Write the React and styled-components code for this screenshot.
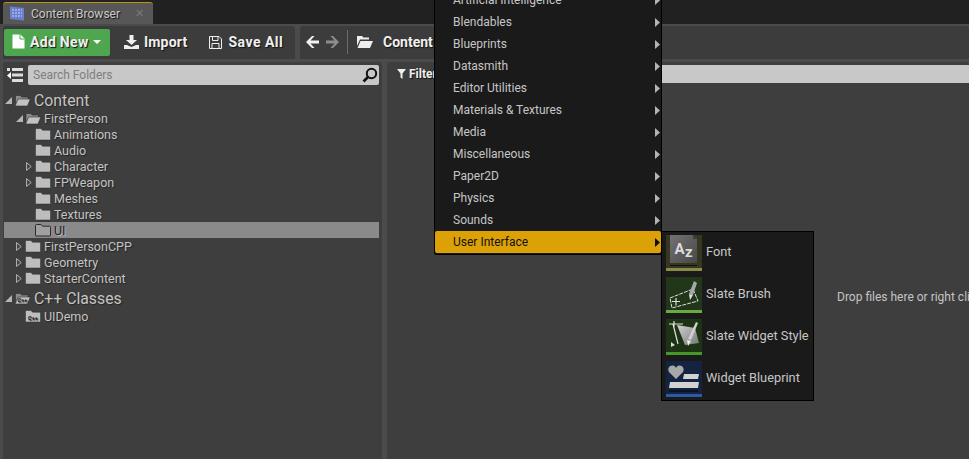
import React from "react";
import styled, { createGlobalStyle } from "styled-components";

const Global = createGlobalStyle`
  html, body { margin: 0; padding: 0; background: #212121; overflow: hidden; }
  #root { width: 969px; height: 459px; }
`;

const Page = styled.div`
  position: relative;
  width: 969px;
  height: 459px;
  overflow: hidden;
  display: flex;
  flex-direction: column;
  background: #212121;
  font-family: Roboto, "Liberation Sans", sans-serif;
`;

const TabStrip = styled.div`
  height: 24px;
  flex: none;
  padding: 2px 0 0 3px;
  box-sizing: border-box;
  display: flex;
`;

const Tab = styled.div`
  width: 150px;
  height: 22px;
  box-sizing: border-box;
  background: #575757;
  border-top: 1px solid #b8960f;
  border-radius: 3px 3px 0 0;
  display: flex;
  align-items: center;
  padding: 0 0 0 6px;
  color: #c9c9c9;
  font-size: 12px;
`;

const TabLabel = styled.span`
  margin-left: 6px;
  text-shadow: 1px 1px 1px #111;
`;

const TabClose = styled.span`
  margin-left: 15px;
  color: #7a7a7a;
  font-size: 11px;
`;

const Body = styled.div`
  flex: 1;
  min-height: 0;
  background: #4b4b4b;
  display: flex;
  flex-direction: column;
  padding: 2px 0 0 3px;
  gap: 3px;
`;

const ToolRow = styled.div`
  display: flex;
  gap: 5px;
  height: 33px;
  flex: none;
`;

const ToolGroup = styled.div`
  background: #3c3c3c;
  border-radius: 3px 3px 0 0;
  display: flex;
  align-items: center;
  box-sizing: border-box;
  height: 33px;
  width: ${(p) => p.$w}px;
  padding: 0 0 1px ${(p) => p.$pad}px;
`;

const AddButton = styled.div`
  width: 106px;
  height: 27px;
  background: #4ea64f;
  border-radius: 2px;
  display: flex;
  align-items: center;
  padding: 0 0 1px 8px;
  box-sizing: border-box;
  margin-right: 14px;
`;

const ToolText = styled.span`
  color: #f0f0f0;
  font-size: 14px;
  font-weight: 700;
  letter-spacing: ${(p) => p.$ls || 0}px;
  text-shadow: 1px 1px 1px #111;
  margin-left: ${(p) => p.$ml || 5}px;
  margin-right: ${(p) => p.$mr || 0}px;
  white-space: nowrap;
`;

const Divider = styled.div`
  width: 1px;
  height: 24px;
  background: #6a6a6a;
  margin: 0 9px 0 8px;
`;

const Panels = styled.div`
  flex: 1;
  display: flex;
  gap: 5px;
  min-height: 0;
`;

const LeftPanel = styled.div`
  width: 379px;
  background: #3e3e3e;
  border-radius: 3px 3px 0 0;
  display: flex;
  flex-direction: column;
  padding-top: 3px;
`;

const SearchRow = styled.div`
  display: flex;
  align-items: center;
  height: 20px;
  padding-left: 4px;
  gap: 5px;
`;

const SearchBox = styled.div`
  width: 351px;
  height: 20px;
  background: #c8c8c8;
  border-radius: 2px;
  display: flex;
  align-items: center;
  justify-content: space-between;
  padding: 0 1px 0 5px;
  box-sizing: border-box;
  color: #7f7f7f;
  font-size: 12px;
`;

const Tree = styled.div`
  display: flex;
  flex-direction: column;
  padding: 4px 3px 0 1px;
`;

const Row = styled.div`
  height: ${(p) => (p.$root ? 22 : 16)}px;
  flex: none;
  display: flex;
  align-items: center;
  padding-left: ${(p) => p.$x}px;
  background: ${(p) => (p.$sel ? "#8a8a8a" : "transparent")};
  color: ${(p) => (p.$sel ? "#1e1e1e" : "#c4c4c4")};
  font-size: ${(p) => (p.$root ? 15.8 : 12.5)}px;
  margin-top: ${(p) => p.$mt || 0}px;
  text-shadow: ${(p) => (p.$sel ? "1px 1px 0 #b5b5b5" : "1px 1px 1px #262626")};
`;

const Arrow = styled.span`
  width: 9px;
  flex: none;
  display: flex;
  align-items: center;
`;

const RowLabel = styled.span`
  margin-left: 3px;
  white-space: nowrap;
`;

const RightPanel = styled.div`
  flex: 1;
  background: #3e3e3e;
  border-radius: 3px 3px 0 0;
  position: relative;
  padding: 2px 0 0 10px;
`;

const FilterRow = styled.div`
  display: flex;
  align-items: center;
  height: 20px;
  color: #eee;
  font-size: 12px;
  font-weight: 700;
  text-shadow: 1px 1px 1px #111;
  gap: 3px;
`;

const SearchStrip = styled.div`
  position: absolute;
  top: 3px;
  left: 273px;
  right: 0;
  height: 18px;
  background: #c8c8c8;
`;

const DropHint = styled.div`
  position: absolute;
  left: 450px;
  top: 228px;
  color: #c4c4c4;
  font-size: 12px;
  white-space: nowrap;
`;

const Menu = styled.div`
  position: absolute;
  left: 434px;
  top: -12px;
  width: 228px;
  box-sizing: border-box;
  background: #1a1a1a;
  border: 1px solid #000;
  border-radius: 0 0 2px 2px;
  padding-bottom: 1px;
`;

const MenuItem = styled.div`
  height: 22px;
  box-sizing: border-box;
  display: flex;
  align-items: center;
  justify-content: space-between;
  padding: 0 1px 0 18px;
  font-size: 12px;
  color: ${(p) => (p.$on ? "#111" : "#c6c6c6")};
  background: ${(p) => (p.$on ? "#dca107" : "transparent")};
  border-radius: ${(p) => (p.$on ? "2px" : "0")};
`;

const SubMenu = styled.div`
  position: absolute;
  left: 661px;
  top: 231px;
  width: 153px;
  height: 170px;
  box-sizing: border-box;
  background: #1a1a1a;
  border: 1px solid #000;
  padding: 3px 0 0 4px;
  display: flex;
  flex-direction: column;
  gap: 6px;
`;

const SubItem = styled.div`
  display: flex;
  align-items: center;
  height: 36px;
  color: #c6c6c6;
  font-size: 12.8px;
  gap: 4px;
  white-space: nowrap;
`;

const SubLabel = styled.span`
  margin-bottom: 4px;
`;

const Thumb = styled.svg`
  width: 36px;
  height: 36px;
  flex: none;
  display: block;
`;

const Svg = styled.svg`
  flex: none;
  display: block;
`;

const Caret = styled(Svg)`
  margin-left: 5px;
`;

const ForwardArrow = styled(Svg)`
  margin-left: 7px;
`;

const Down = () => (
  <Svg width="7" height="7" viewBox="0 0 7 7"><path d="M7 0V7H0Z" fill="#b5b5b5" /></Svg>
);
const Right = () => (
  <Svg width="6" height="9" viewBox="0 0 6 9"><path d="M0.6 0.6L5.2 4.5L0.6 8.4Z" fill="none" stroke="#b8b8b8" strokeWidth="1" /></Svg>
);
const MenuArrow = ({ on }) => (
  <Svg width="5" height="9" viewBox="0 0 5 9"><path d="M0 0L5 4.5L0 9Z" fill={on ? "#111" : "#b4b4b4"} /></Svg>
);

const Folder = ({ open, big, cpp, sel }) => {
  const w = big ? 17 : 16;
  const closed = "M0.5 2.5Q0.5 1.5 1.5 1.5H6L7.5 3.2H14.5Q15.5 3.2 15.5 4.2V12.5Q15.5 13 15 13H1Q0.5 13 0.5 12.5Z";
  return (
    <Svg width={w} height="14" viewBox="0 0 16 14">
      {open ? (
        <>
          <path d="M1 2.5H6L7 4H13.5V7H4.5L1 12.5Z" fill="#8c8c8c" stroke="#2c2c2c" strokeWidth="0.6" />
          <path d="M3.6 6H15.8L13 13H0.6Z" fill="#c2c2c2" stroke="#2c2c2c" strokeWidth="0.6" />
        </>
      ) : (
        <path d={closed} fill={sel ? "#a0a0a0" : "#bdbdbd"} stroke={sel ? "#2a2a2a" : "#2e2e2e"} strokeWidth={sel ? 1 : 0.5} />
      )}
      {cpp && <text x="8" y="11.3" fontSize="5.6" fontWeight="700" fill="#222" textAnchor="middle" fontFamily="Roboto">C++</text>}
    </Svg>
  );
};

const Rows = [
  { t: "Content", x: 1, a: "d", open: true, root: true },
  { t: "FirstPerson", x: 12, a: "d", open: true, mt: -1 },
  { t: "Animations", x: 22 },
  { t: "Audio", x: 22 },
  { t: "Character", x: 22, a: "r" },
  { t: "FPWeapon", x: 22, a: "r" },
  { t: "Meshes", x: 22 },
  { t: "Textures", x: 22 },
  { t: "UI", x: 22, sel: true },
  { t: "FirstPersonCPP", x: 12, a: "r" },
  { t: "Geometry", x: 12, a: "r" },
  { t: "StarterContent", x: 12, a: "r" },
  { t: "C++ Classes", x: 1, a: "d", root: true, open: true, cpp: true, mt: 1 },
  { t: "UIDemo", x: 12, cpp: true, mt: -1 },
];

const MenuList = ["Artificial Intelligence", "Blendables", "Blueprints", "Datasmith", "Editor Utilities", "Materials & Textures", "Media", "Miscellaneous", "Paper2D", "Physics", "Sounds", "User Interface"];

const FontThumb = () => (
  <Thumb viewBox="0 0 36 36">
    <defs>
      <linearGradient id="fontTile" x1="0" y1="0" x2="1" y2="1">
        <stop offset="0" stopColor="#727272" />
        <stop offset="1" stopColor="#484848" />
      </linearGradient>
    </defs>
    <rect width="36" height="36" fill="#35371f" />
    <path d="M4 0H27L31 4V28H4Z" fill="url(#fontTile)" />
    <path d="M27 0L31 4H27Z" fill="#3d3d3d" />
    <rect x="4" y="30" width="27" height="1" fill="#111" />
    <text x="8.5" y="19" fontSize="15" fontWeight="700" fill="#dcdcdc" fontFamily="Roboto">A</text>
    <text x="19" y="22" fontSize="15" fontWeight="700" fill="#dcdcdc" fontFamily="Roboto">z</text>
    <rect y="33" width="36" height="3" fill="#8b8a46" />
  </Thumb>
);
const BrushThumb = () => (
  <Thumb viewBox="0 0 36 36">
    <rect width="36" height="36" fill="#22361a" />
    <path d="M4 21L27 12L32 24L6 31Z" fill="none" stroke="#ddd" strokeWidth="1" strokeDasharray="4 1" />
    <path d="M6 24.5H14M10 21V28.5" stroke="#ddd" strokeWidth="1.2" />
    <path d="M28 4L31 6L27 18L23 17Z" fill="#a8a8a8" />
    <path d="M23 17L27 18L24 23Z" fill="#e0e0e0" />
    <rect y="33" width="36" height="3" fill="#6aa93c" />
  </Thumb>
);
const StyleThumb = () => (
  <Thumb viewBox="0 0 36 36">
    <defs>
      <linearGradient id="styleTile" x1="0" y1="0" x2="1" y2="1">
        <stop offset="0" stopColor="#d2d2d2" />
        <stop offset="1" stopColor="#777" />
      </linearGradient>
    </defs>
    <rect width="36" height="36" fill="#1c3314" />
    <path d="M11 6L29 9L33 24L19 26Z" fill="url(#styleTile)" />
    <path d="M3 5H17M8 2V8M7 5L12 25" stroke="#e2e2e2" strokeWidth="1.2" fill="none" />
    <path d="M30 3L32 4L25 21L22 20Z" fill="#d0d0d0" />
    <path d="M21 21L25 22L22 27Z" fill="#eee" />
    <path d="M5 23L9 26L5 28Z" fill="#ddd" />
    <rect y="33" width="36" height="3" fill="#46962a" />
  </Thumb>
);
const WidgetThumb = () => (
  <Thumb viewBox="0 0 36 36">
    <rect width="36" height="36" fill="#14233f" />
    <path d="M10 18L3 11C1 7 4 4 7 4.5C8.5 4.7 9.5 5.5 10 7C10.5 5.5 12 4.7 13 4.5C16 4 19 7 17 11Z" fill="#a8a8a8" />
    <path d="M18 13H33L32 18H17Z" fill="#d2d2d2" />
    <path d="M4 21H33L32 27H3Z" fill="#d2d2d2" />
    <rect x="3" y="29" width="29" height="2" fill="#0b1220" />
    <rect y="33" width="36" height="3" fill="#2a5aa8" />
  </Thumb>
);

export default function App() {
  return (
    <Page>
      <Global />
      <TabStrip>
        <Tab>
          <Svg width="16" height="15" viewBox="0 0 16 15">
            <path d="M1 0.5L15 2V14.5L1 13Z" fill="#6a7fd0" />
            <path d="M3 4H13M3 7H13M3 10H13" stroke="#cfd5f2" strokeWidth="1" strokeDasharray="2 1" />
          </Svg>
          <TabLabel>Content Browser</TabLabel>
          <TabClose>✕</TabClose>
        </Tab>
      </TabStrip>
      <Body>
        <ToolRow>
          <ToolGroup $w={292} $pad={1}>
            <AddButton>
              <Svg width="13" height="15" viewBox="0 0 13 15"><path d="M0.5 0.5H8.5L12.5 4.5V14.5H0.5Z" fill="#fff" /><path d="M8 0.5V5H12.5" fill="none" stroke="#4ea64f" /></Svg>
              <ToolText $ml={5} $ls={0.3}>Add New</ToolText>
              <Caret width="8" height="4" viewBox="0 0 8 4"><path d="M0 0H8L4 4Z" fill="#fff" /></Caret>
            </AddButton>
            <Svg width="15" height="14" viewBox="0 0 15 14"><path d="M5.5 0H9.5V5H13L7.5 10L2 5H5.5Z" fill="#eee" /><path d="M0 10H3L7.5 12L12 10H15V14H0Z" fill="#eee" /></Svg>
            <ToolText $ml={5} $mr={22} $ls={0.2}>Import</ToolText>
            <Svg width="13" height="13" viewBox="0 0 13 13"><path d="M0.5 0.5H10L12.5 3V12.5H0.5Z" fill="none" stroke="#eee" /><path d="M3.5 1V4.5H9V1M3 12V7.5H10V12" fill="none" stroke="#eee" /></Svg>
            <ToolText $ml={6} $ls={0.5}>Save All</ToolText>
          </ToolGroup>
          <ToolGroup $w={669} $pad={6}>
            <Svg width="13" height="12" viewBox="0 0 13 12"><path d="M6 0L0 6L6 12H8.5L4.5 7.5H13V4.5H4.5L8.5 0Z" fill="#f2f2f2" /></Svg>
            <ForwardArrow width="13" height="12" viewBox="0 0 13 12"><path d="M7 0L13 6L7 12H4.5L8.5 7.5H0V4.5H8.5L4.5 0Z" fill="#8d8d8d" /></ForwardArrow>
            <Divider />
            <Svg width="16" height="12" viewBox="0 0 16 12"><path d="M0 0H5L6.5 1.5H12V3.5H3L0 10Z" fill="#eee" /><path d="M3.5 5H16L13 12H0.5Z" fill="#eee" /></Svg>
            <ToolText $ml={10}>Content</ToolText>
          </ToolGroup>
        </ToolRow>
        <Panels>
          <LeftPanel>
            <SearchRow>
              <Svg width="16" height="14" viewBox="0 0 16 14"><path d="M0 0H3V3H0ZM5 0H16V3H5ZM5 5.5H16V8.5H5ZM5 11H16V14H5Z" fill="#ddd" /><path d="M4 4V11L0 7.5Z" fill="#fff" /></Svg>
              <SearchBox>
                Search Folders
                <Svg width="16" height="16" viewBox="0 0 16 16"><circle cx="9.5" cy="6.5" r="4.7" fill="none" stroke="#111" strokeWidth="2" /><path d="M6 10L1.5 14.5" stroke="#111" strokeWidth="2.6" /></Svg>
              </SearchBox>
            </SearchRow>
            <Tree>
              {Rows.map((r) => (
                <Row key={r.t} $x={r.x} $root={r.root} $sel={r.sel} $mt={r.mt}>
                  <Arrow>{r.a === "d" ? <Down /> : r.a === "r" ? <Right /> : null}</Arrow>
                  <Folder open={r.open} big={r.root} cpp={r.cpp} sel={r.sel} />
                  <RowLabel>{r.t}</RowLabel>
                </Row>
              ))}
            </Tree>
          </LeftPanel>
          <RightPanel>
            <FilterRow>
              <Svg width="9" height="10" viewBox="0 0 9 10"><path d="M0 0H9L5.5 4.5V10L3.5 8.5V4.5Z" fill="#eee" /></Svg>
              Filters
            </FilterRow>
            <SearchStrip />
            <DropHint>Drop files here or right click to create content.</DropHint>
          </RightPanel>
        </Panels>
      </Body>
      <Menu>
        {MenuList.map((m) => (
          <MenuItem key={m} $on={m === "User Interface"}>
            {m}
            <MenuArrow on={m === "User Interface"} />
          </MenuItem>
        ))}
      </Menu>
      <SubMenu>
        <SubItem><FontThumb /><SubLabel>Font</SubLabel></SubItem>
        <SubItem><BrushThumb /><SubLabel>Slate Brush</SubLabel></SubItem>
        <SubItem><StyleThumb /><SubLabel>Slate Widget Style</SubLabel></SubItem>
        <SubItem><WidgetThumb /><SubLabel>Widget Blueprint</SubLabel></SubItem>
      </SubMenu>
    </Page>
  );
}
